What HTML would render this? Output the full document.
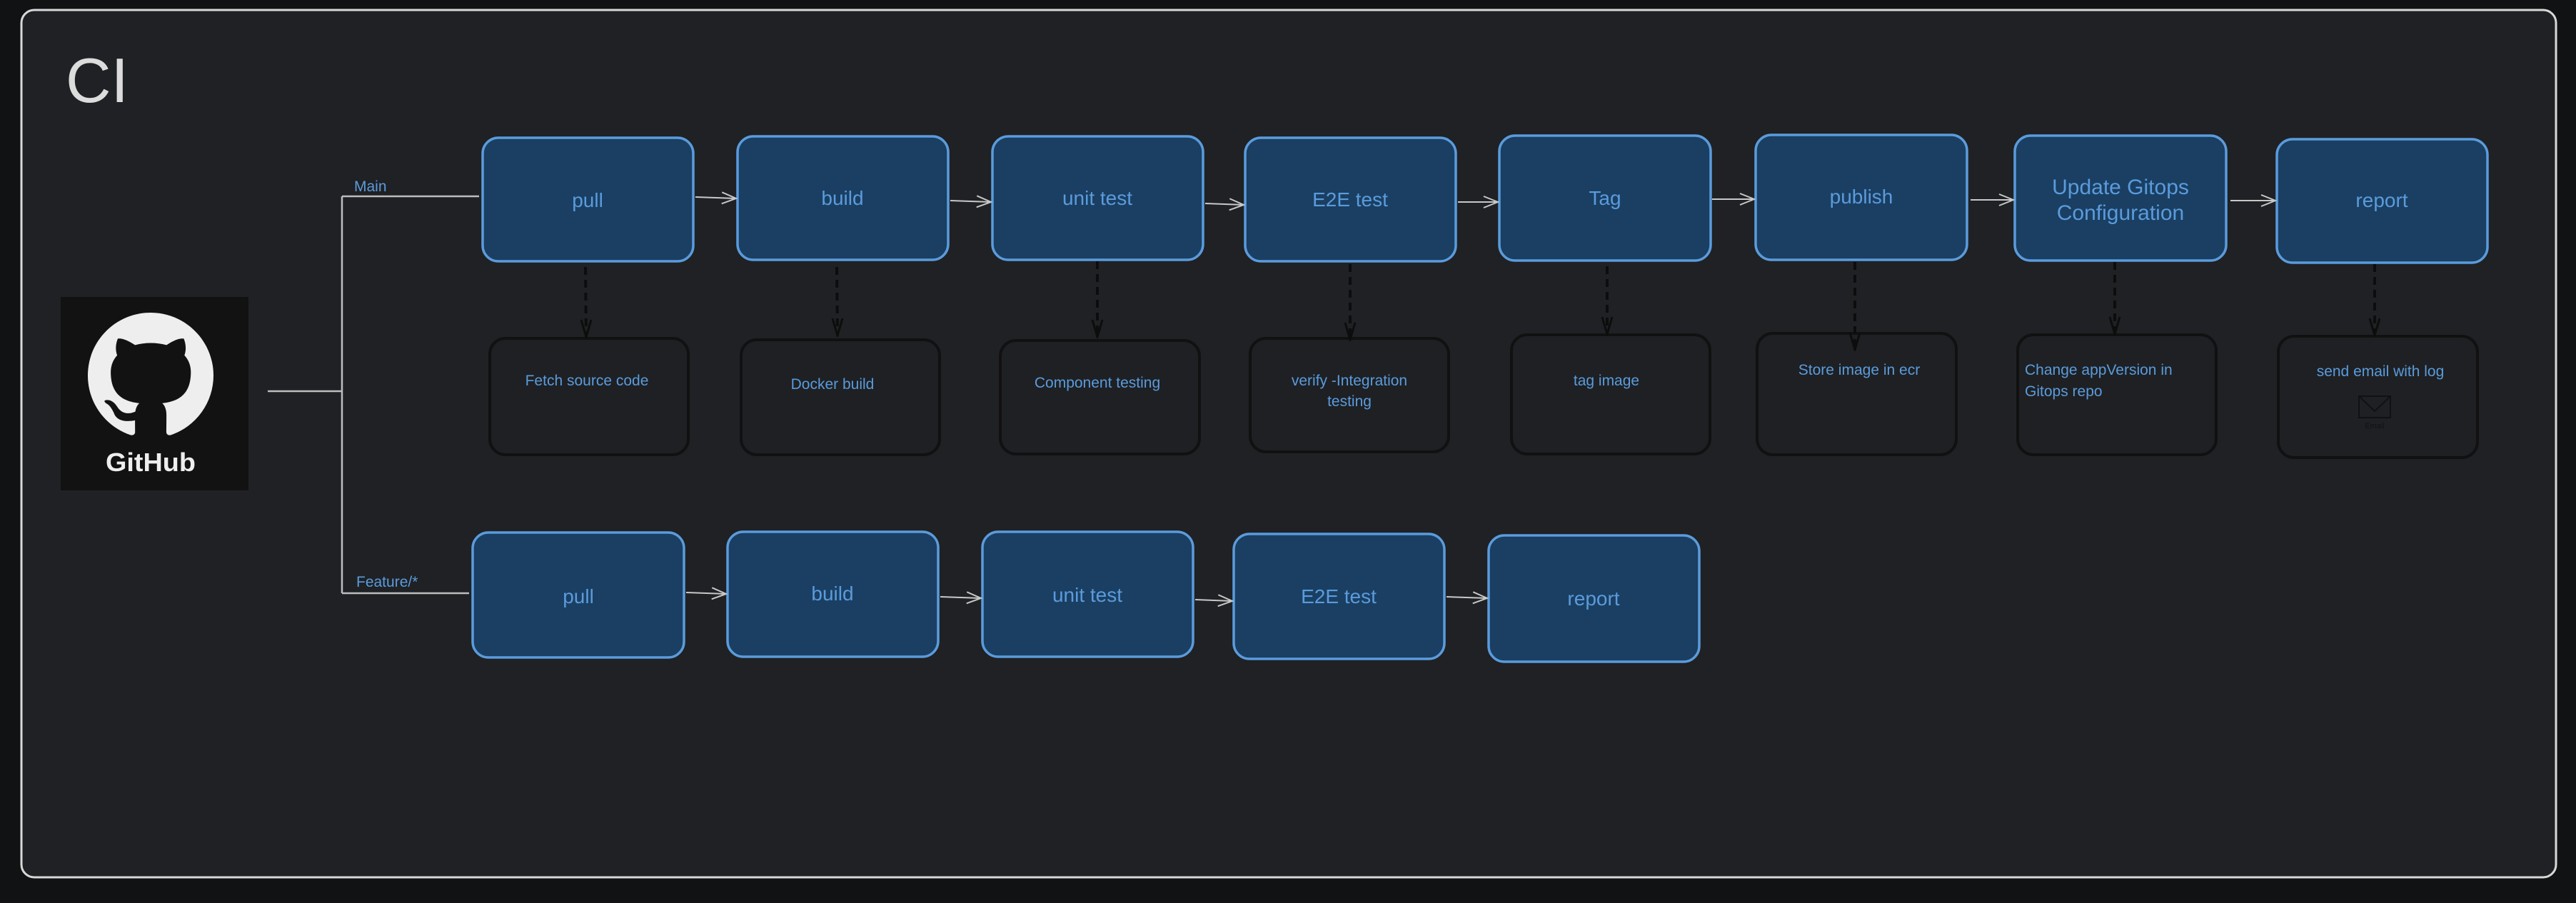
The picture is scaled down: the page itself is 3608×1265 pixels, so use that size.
<!DOCTYPE html>
<html><head><meta charset="utf-8"><style>
html,body{margin:0;padding:0;background:#111214;}
svg{display:block;}
text{font-family:"Liberation Sans",sans-serif;}
</style></head><body>
<svg width="3608" height="1265" viewBox="0 0 3608 1265" xmlns="http://www.w3.org/2000/svg">
<defs>
<marker id="ah" markerWidth="24" markerHeight="20" refX="22" refY="10" orient="auto" markerUnits="userSpaceOnUse">
<path d="M2 2 L22 10 L2 18" fill="none" stroke="#c8c8c8" stroke-width="2"/>
</marker>
<marker id="dh" markerWidth="20" markerHeight="28" refX="10" refY="26" orient="0" markerUnits="userSpaceOnUse">
<path d="M3 2 L10 26 L17 2" fill="none" stroke="#0d0d0d" stroke-width="3"/>
</marker>
</defs>
<rect x="0" y="0" width="3608" height="1265" fill="#111214"/>
<rect x="30" y="14" width="3550" height="1215" rx="18" fill="#1f2124" stroke="#d8d8d8" stroke-width="3"/>
<text x="92" y="143" font-size="88" fill="#dcdcdc" font-weight="300">CI</text>

<!-- GitHub logo -->
<rect x="85" y="416" width="263" height="271" fill="#121212"/>
<g transform="translate(123,438) scale(11)">
<path fill="#eeeeee" d="M8 0C3.58 0 0 3.58 0 8c0 3.54 2.29 6.53 5.47 7.59.4.07.55-.17.55-.38 0-.19-.01-.82-.01-1.49-2.01.37-2.53-.49-2.69-.94-.09-.23-.48-.94-.82-1.13-.28-.15-.68-.52-.01-.53.63-.01 1.08.58 1.23.82.72 1.21 1.87.87 2.33.66.07-.52.28-.87.51-1.07-1.78-.2-3.64-.89-3.64-3.95 0-.87.31-1.59.82-2.15-.08-.2-.36-1.02.08-2.12 0 0 .67-.21 2.2.82.64-.18 1.32-.27 2-.27.68 0 1.36.09 2 .27 1.53-1.04 2.2-.82 2.2-.82.44 1.1.16 1.92.08 2.12.51.56.82 1.27.82 2.15 0 3.07-1.87 3.75-3.65 3.95.29.25.54.73.54 1.48 0 1.07-.01 1.93-.01 2.2 0 .21.15.46.55.38A8.013 8.013 0 0016 8c0-4.42-3.58-8-8-8z"/>
</g>
<text x="211" y="660" font-size="36" font-weight="bold" fill="#eeeeee" text-anchor="middle" textLength="126" lengthAdjust="spacingAndGlyphs">GitHub</text>

<!-- branch lines -->
<g stroke="#bdbdbd" stroke-width="2.5" fill="none">
<path d="M375 548 H479"/>
<path d="M479 275 V831"/>
<path d="M479 275 H671"/>
<path d="M479 831 H657"/>
</g>
<text x="496" y="268" font-size="21" fill="#5b9bdc">Main</text>
<text x="499" y="822" font-size="21" fill="#5b9bdc">Feature/*</text>

<!-- top row boxes -->
<g fill="#1a3f62" stroke="#5b9bdc" stroke-width="3.5">
<rect x="676" y="193" width="295" height="173" rx="22"/>
<rect x="1033" y="191" width="295" height="173" rx="22"/>
<rect x="1390" y="191" width="295" height="173" rx="22"/>
<rect x="1744" y="193" width="295" height="173" rx="22"/>
<rect x="2100" y="190" width="296" height="175" rx="22"/>
<rect x="2459" y="189" width="296" height="175" rx="22"/>
<rect x="2822" y="190" width="296" height="175" rx="22"/>
<rect x="3189" y="195" width="295" height="173" rx="22"/>
</g>
<g font-size="28" fill="#5b9bdc" text-anchor="middle">
<text x="823" y="290">pull</text>
<text x="1180" y="287">build</text>
<text x="1537" y="287">unit test</text>
<text x="1891" y="289">E2E test</text>
<text x="2248" y="287">Tag</text>
<text x="2607" y="285">publish</text>
<text x="2970" y="272" font-size="30">Update Gitops</text>
<text x="2970" y="308" font-size="30">Configuration</text>
<text x="3336" y="290">report</text>
</g>
<!-- top arrows -->
<g stroke="#c8c8c8" stroke-width="2" marker-end="url(#ah)">
<line x1="974" y1="276" x2="1031" y2="278"/>
<line x1="1331" y1="281" x2="1388" y2="283"/>
<line x1="1688" y1="285" x2="1742" y2="287"/>
<line x1="2042" y1="283" x2="2098" y2="283"/>
<line x1="2398" y1="279" x2="2457" y2="279"/>
<line x1="2760" y1="280" x2="2820" y2="280"/>
<line x1="3124" y1="281" x2="3187" y2="281"/>
</g>

<!-- detail boxes -->
<g fill="#1e2023" stroke="#111111" stroke-width="4">
<rect x="686" y="474" width="278" height="163" rx="22"/>
<rect x="1038" y="476" width="278" height="161" rx="22"/>
<rect x="1401" y="477" width="279" height="159" rx="22"/>
<rect x="1751" y="474" width="278" height="159" rx="22"/>
<rect x="2117" y="469" width="278" height="167" rx="22"/>
<rect x="2461" y="467" width="279" height="170" rx="22"/>
<rect x="2826" y="469" width="278" height="168" rx="22"/>
<rect x="3191" y="471" width="279" height="170" rx="22"/>
</g>
<!-- dashed arrows -->
<g stroke="#0d0d0d" stroke-width="4" stroke-dasharray="11 7" marker-end="url(#dh)">
<line x1="820" y1="374" x2="821" y2="472"/>
<line x1="1172" y1="374" x2="1173" y2="470"/>
<line x1="1537" y1="366" x2="1537" y2="472"/>
<line x1="1891" y1="370" x2="1891" y2="476"/>
<line x1="2251" y1="373" x2="2251" y2="468"/>
<line x1="2598" y1="367" x2="2598" y2="490"/>
<line x1="2962" y1="367" x2="2962" y2="468"/>
<line x1="3326" y1="370" x2="3326" y2="470"/>
</g>
<g font-size="21" fill="#5b9bdc" text-anchor="middle">
<text x="822" y="540">Fetch source code</text>
<text x="1166" y="545">Docker build</text>
<text x="1537" y="543">Component testing</text>
<text x="1890" y="540">verify -Integration</text>
<text x="1890" y="569">testing</text>
<text x="2250" y="540">tag image</text>
<text x="2604" y="525">Store image in ecr</text>
<text x="2836" y="525" text-anchor="start">Change appVersion in</text>
<text x="2836" y="555" text-anchor="start">Gitops repo</text>
<text x="3334" y="527">send email with log</text>
</g>
<g stroke="#111" stroke-width="2" fill="none">
<rect x="3304" y="555" width="44" height="30"/>
<path d="M3304 555 L3326 576 L3348 555"/>
</g>
<text x="3326" y="600" font-size="11" fill="#111" text-anchor="middle">Email</text>

<!-- feature row -->
<g fill="#1a3f62" stroke="#5b9bdc" stroke-width="3.5">
<rect x="662" y="746" width="296" height="175" rx="22"/>
<rect x="1019" y="745" width="295" height="175" rx="22"/>
<rect x="1376" y="745" width="295" height="175" rx="22"/>
<rect x="1728" y="748" width="295" height="175" rx="22"/>
<rect x="2085" y="750" width="295" height="177" rx="22"/>
</g>
<g font-size="28" fill="#5b9bdc" text-anchor="middle">
<text x="810" y="845">pull</text>
<text x="1166" y="841">build</text>
<text x="1523" y="843">unit test</text>
<text x="1875" y="845">E2E test</text>
<text x="2232" y="848">report</text>
</g>
<g stroke="#c8c8c8" stroke-width="2" marker-end="url(#ah)">
<line x1="961" y1="830" x2="1017" y2="832"/>
<line x1="1317" y1="836" x2="1374" y2="838"/>
<line x1="1674" y1="840" x2="1726" y2="842"/>
<line x1="2026" y1="836" x2="2083" y2="838"/>
</g>
</svg>
</body></html>
